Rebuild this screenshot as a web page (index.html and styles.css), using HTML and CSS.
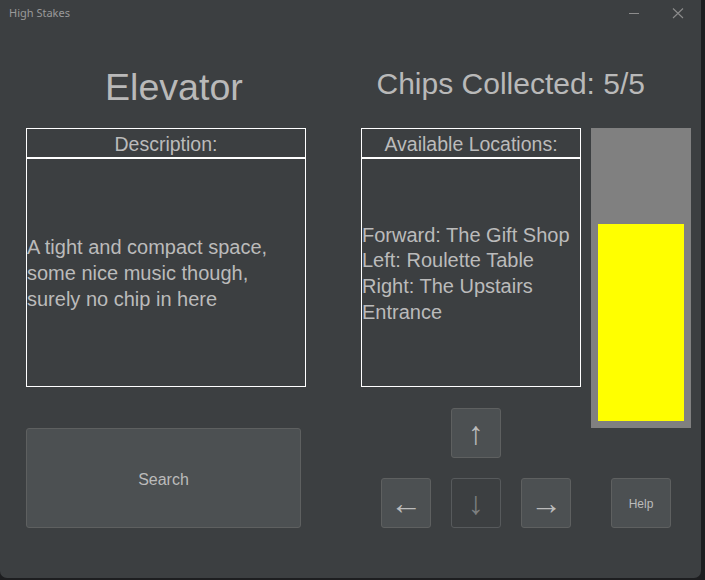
FILE: index.html
```html
<!DOCTYPE html>
<html>
<head>
<meta charset="utf-8">
<title>High Stakes</title>
<link rel="stylesheet" href="styles.css">
</head>
<body>
<div class="window">
  <div class="titlebar">
    <span class="app-title">High Stakes</span>
    <div class="win-controls">
      <svg class="win-min" width="12" height="12" viewBox="0 0 12 12"><line x1="1" y1="6.5" x2="11" y2="6.5" stroke="#8c8c8c" stroke-width="1"/></svg>
      <svg class="win-close" width="12" height="12" viewBox="0 0 12 12"><path d="M1 1.5 L11 11 M11 1.5 L1 11" stroke="#8c8c8c" stroke-width="1.1" fill="none"/></svg>
    </div>
  </div>
  <div class="content">
    <h1 class="room">Elevator</h1>
    <h2 class="chips">Chips Collected: 5/5</h2>

    <section class="panel desc">
      <div class="panel-head">Description:</div>
      <div class="panel-body">A tight and compact space,<br>some nice music though,<br>surely no chip in here</div>
    </section>

    <section class="panel locs">
      <div class="panel-head">Available Locations:</div>
      <div class="panel-body">Forward: The Gift Shop<br>Left: Roulette Table<br>Right: The Upstairs<br>Entrance</div>
    </section>

    <div class="meter"><div class="meter-fill"></div></div>

    <button class="btn search">Search</button>

    <div class="nav">
      <button class="btn arrow up">↑</button>
      <button class="btn arrow left">←</button>
      <button class="btn arrow down" disabled>↓</button>
      <button class="btn arrow right">→</button>
    </div>

    <button class="btn help">Help</button>
  </div>
</div>
</body>
</html>
```
FILE: styles.css
```css
* { box-sizing: border-box; }

html, body {
  margin: 0;
  padding: 0;
  background: #1d1e20;
}

.window {
  width: 701px;
  height: 578px;
  background: #3c3f41;
  border-radius: 0 0 7px 7px;
  font-family: "Liberation Sans", Arial, sans-serif;
  color: #bbbbbb;
  overflow: hidden;
}

.titlebar {
  height: 28px;
  display: flex;
  align-items: flex-start;
  justify-content: space-between;
}

.app-title {
  font-family: "Noto Sans", sans-serif;
  font-size: 11px;
  color: #9a9a9a;
  padding: 5px 0 0 9px;
  line-height: 16px;
}

.win-controls {
  display: flex;
  gap: 32px;
  padding: 7px 17px 0 0;
}

.content {
  display: grid;
  grid-template-columns: 280px 55px 220px 10px 100px;
  grid-template-rows: 100px 259px 21px 20px 30px 20px 50px;
  padding-left: 26px;
}

.room {
  grid-column: 1 / 3;
  grid-row: 1;
  margin: 0 0 0 79px;
  padding-top: 37.5px;
  font-size: 37.6px;
  line-height: 42px;
  font-weight: normal;
  color: #b9b9b9;
}

.chips {
  grid-column: 3 / 6;
  grid-row: 1;
  margin: 0 0 0 15.5px;
  padding-top: 38.4px;
  font-size: 30px;
  line-height: 35px;
  font-weight: normal;
  color: #b9b9b9;
}

.panel {
  display: flex;
  flex-direction: column;
}

.desc { grid-column: 1; grid-row: 2; }
.locs { grid-column: 3; grid-row: 2; }

.panel-head {
  height: 30px;
  border: 1px solid #ffffff;
  text-align: center;
  font-size: 19.5px;
  line-height: 28px;
  padding-top: 1px;
}

.panel-body {
  flex: 1;
  border: 1px solid #ffffff;
  display: flex;
  align-items: center;
  font-size: 20px;
  line-height: 25.7px;
  padding-top: 3px;
}

.meter {
  grid-column: 5;
  grid-row: 2 / 5;
  background: #808080;
  display: flex;
  flex-direction: column;
  justify-content: flex-end;
  padding: 0 7px 7px;
}

.meter-fill {
  height: 197px;
  background: #ffff00;
}

.btn {
  font-family: "Liberation Sans", Arial, sans-serif;
  background: #4c5052;
  border: 1px solid #5e6060;
  border-radius: 3px;
  color: #bbbbbb;
  padding: 0;
  margin: 0;
}

.search {
  grid-column: 1;
  grid-row: 5 / 8;
  width: 275px;
  font-size: 16px;
  padding-top: 3px;
}

.nav {
  grid-column: 3;
  grid-row: 4 / 8;
  display: grid;
  grid-template-columns: repeat(3, 50px);
  grid-template-rows: 50px 50px;
  gap: 20px;
  margin-left: 20px;
}

.arrow {
  width: 50px;
  height: 50px;
  font-size: 32px;
  line-height: 48px;
}

.up { grid-column: 2; grid-row: 1; }
.left { grid-column: 1; grid-row: 2; padding-bottom: 4px; }
.down { grid-column: 2; grid-row: 2; background: #3c3f41; color: #7d7f80; border-color: #575a5c; }
.right { grid-column: 3; grid-row: 2; padding-bottom: 4px; }

.help {
  grid-column: 5;
  grid-row: 7;
  width: 60px;
  margin-left: 20px;
  font-size: 12px;
  padding-top: 2px;
}
```
